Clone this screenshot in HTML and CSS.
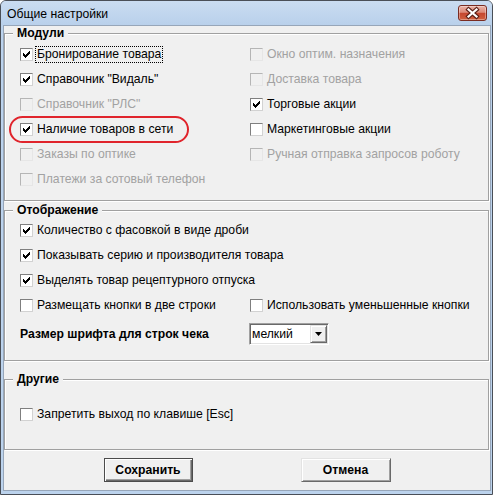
FILE: index.html
```html
<!DOCTYPE html>
<html lang="ru">
<head>
<meta charset="utf-8">
<title>Общие настройки</title>
<link rel="stylesheet" href="styles.css">
</head>
<body>
<div class="window">
  <div class="titlebar">
    <span class="title">Общие настройки</span>
    <div class="close">
      <svg width="27" height="14" viewBox="0 0 27 14">
        <path d="M9.5 3.5 L17.5 10.5 M17.5 3.5 L9.5 10.5" stroke="#5b2118" stroke-width="4.4" stroke-linecap="square" fill="none"/>
        <path d="M9.5 3.5 L17.5 10.5 M17.5 3.5 L9.5 10.5" stroke="#ffffff" stroke-width="2.2" stroke-linecap="square" fill="none"/>
      </svg>
    </div>
  </div>
  <div class="client">
    <fieldset class="group g1">
      <legend>Модули</legend>
      <div class="grid">
        <div class="cb"><span class="box"><svg class="chk" width="11" height="11" viewBox="-2 -2 11 11"><path d="M0 2H1V3H2V4H3V3H4V2H5V1H6V0H7V3H6V4H5V5H4V6H3V7H2V6H1V5H0Z"/></svg></span><span class="lbl focus">Бронирование товара</span></div>
        <div class="cb disabled"><span class="box"></span><span class="lbl">Окно оптим. назначения</span></div>
        <div class="cb"><span class="box"><svg class="chk" width="11" height="11" viewBox="-2 -2 11 11"><path d="M0 2H1V3H2V4H3V3H4V2H5V1H6V0H7V3H6V4H5V5H4V6H3V7H2V6H1V5H0Z"/></svg></span><span class="lbl">Справочник "Видаль"</span></div>
        <div class="cb disabled"><span class="box"></span><span class="lbl">Доставка товара</span></div>
        <div class="cb disabled"><span class="box"></span><span class="lbl">Справочник "РЛС"</span></div>
        <div class="cb"><span class="box"><svg class="chk" width="11" height="11" viewBox="-2 -2 11 11"><path d="M0 2H1V3H2V4H3V3H4V2H5V1H6V0H7V3H6V4H5V5H4V6H3V7H2V6H1V5H0Z"/></svg></span><span class="lbl">Торговые акции</span></div>
        <div class="cb"><span class="box"><svg class="chk" width="11" height="11" viewBox="-2 -2 11 11"><path d="M0 2H1V3H2V4H3V3H4V2H5V1H6V0H7V3H6V4H5V5H4V6H3V7H2V6H1V5H0Z"/></svg></span><span class="lbl">Наличие товаров в сети</span></div>
        <div class="cb"><span class="box"></span><span class="lbl">Маркетинговые акции</span></div>
        <div class="cb disabled"><span class="box"></span><span class="lbl">Заказы по оптике</span></div>
        <div class="cb disabled"><span class="box"></span><span class="lbl">Ручная отправка запросов роботу</span></div>
        <div class="cb disabled"><span class="box"></span><span class="lbl">Платежи за сотовый телефон</span></div>
      </div>
    </fieldset>

    <fieldset class="group g2">
      <legend>Отображение</legend>
      <div class="grid">
        <div class="cb wide"><span class="box"><svg class="chk" width="11" height="11" viewBox="-2 -2 11 11"><path d="M0 2H1V3H2V4H3V3H4V2H5V1H6V0H7V3H6V4H5V5H4V6H3V7H2V6H1V5H0Z"/></svg></span><span class="lbl">Количество с фасовкой в виде дроби</span></div>
        <div class="cb wide"><span class="box"><svg class="chk" width="11" height="11" viewBox="-2 -2 11 11"><path d="M0 2H1V3H2V4H3V3H4V2H5V1H6V0H7V3H6V4H5V5H4V6H3V7H2V6H1V5H0Z"/></svg></span><span class="lbl">Показывать серию и производителя товара</span></div>
        <div class="cb wide"><span class="box"><svg class="chk" width="11" height="11" viewBox="-2 -2 11 11"><path d="M0 2H1V3H2V4H3V3H4V2H5V1H6V0H7V3H6V4H5V5H4V6H3V7H2V6H1V5H0Z"/></svg></span><span class="lbl">Выделять товар рецептурного отпуска</span></div>
        <div class="cb"><span class="box"></span><span class="lbl">Размещать кнопки в две строки</span></div>
        <div class="cb"><span class="box"></span><span class="lbl">Использовать уменьшенные кнопки</span></div>
      </div>
      <div class="size-row">
        <span class="size-label">Размер шрифта для строк чека</span>
        <div class="select">
          <span class="value">мелкий</span>
          <span class="drop"><svg width="7" height="4" viewBox="0 0 7 4"><path d="M0 0 H7 L3.5 4 Z" fill="#000"/></svg></span>
        </div>
      </div>
    </fieldset>

    <fieldset class="group g3">
      <legend>Другие</legend>
      <div class="grid">
        <div class="cb wide"><span class="box"></span><span class="lbl">Запретить выход по клавише [Esc]</span></div>
      </div>
    </fieldset>

    <div class="buttons">
      <div class="btn default">Сохранить</div>
      <div class="btn cancel">Отмена</div>
    </div>
  </div>
  <div class="highlight"></div>
</div>
</body>
</html>
```
FILE: styles.css
```css
* { box-sizing: border-box; }
html, body { margin: 0; padding: 0; }
body {
  font-family: "Liberation Sans", Arial, sans-serif;
  font-size: 12.2px;
  color: #000;
  background: #ffffff;
}
.window {
  position: relative;
  width: 493px;
  height: 495px;
  border: 1px solid #4a4f57;
  border-radius: 6px 6px 0 0;
  background: #bcd3ed;
  display: flex;
  flex-direction: column;
  overflow: hidden;
}
.titlebar {
  height: 24px;
  flex: none;
  display: flex;
  align-items: flex-start;
  background: linear-gradient(#cadcf1, #b9d0eb);
}
.title {
  margin: 6px 0 0 6px;
  line-height: 14px;
  color: #000;
}
.close {
  margin: 4px 5px 0 auto;
  width: 29px;
  height: 16px;
  border: 1px solid #7a2c22;
  border-radius: 3px;
  background: linear-gradient(#eab3a7 0%, #dc8a78 45%, #c5472f 52%, #d0603f 100%);
  box-shadow: inset 0 0 0 1px rgba(255, 255, 255, 0.35);
  display: flex;
}
.client {
  flex: 1;
  margin: 0 1px 3px 2px;
  border: 1px solid #97a6b9;
  background: #f0f0f0;
  display: flex;
  flex-direction: column;
}
.group {
  margin: 0 1px 0 0;
  border: 1px solid #a0a0a0;
  box-shadow: inset 1px 1px 0 #ffffff, 1px 1px 0 #ffffff;
  min-width: 0;
}
.group legend {
  padding: 0 4px;
  margin: 0;
  font-weight: bold;
  line-height: 14px;
  background: #f0f0f0;
}
.g1 { padding: 2px 8px 8px; }
.g2 { margin-top: 2px; padding: 1px 8px 15px; }
.g3 { margin-top: 11px; padding: 16px 8px 22px; }
.grid {
  display: grid;
  grid-template-columns: 230px 1fr;
  margin-left: 7px;
}
.cb {
  display: flex;
  align-items: center;
  height: 25px;
  white-space: nowrap;
}
.cb.wide { grid-column: 1 / -1; }
.box {
  position: relative;
  flex: none;
  width: 13px;
  height: 13px;
  border: 1px solid;
  border-color: #7f7f7f #d2d2d2 #d2d2d2 #7f7f7f;
  background: #ffffff;
}
.chk {
  position: absolute;
  left: 0;
  top: 0;
  shape-rendering: crispEdges;
}
.chk path { fill: #000; }
.disabled .box {
  background: #f0f0f0;
  border-color: #b5b5b5 #e6e6e6 #e6e6e6 #b5b5b5;
}
.lbl {
  margin-left: 2px;
  padding: 1px;
  border: 1px dotted transparent;
  line-height: 13px;
}
.lbl.focus { border-color: #000; }
.disabled .lbl { color: #a2a2a2; }
.size-row {
  display: grid;
  grid-template-columns: 229px 80px;
  align-items: center;
  height: 22px;
  margin: 5px 0 0 7px;
}
.size-label { font-weight: bold; }
.select {
  width: 80px;
  height: 22px;
  display: flex;
  align-items: stretch;
  background: #ffffff;
  border: 1px solid;
  border-color: #a0a0a0 #ffffff #ffffff #a0a0a0;
  box-shadow: inset 1px 1px 0 #696969, inset -1px -1px 0 #e3e3e3;
  padding: 1px;
}
.value {
  flex: 1;
  padding-left: 1px;
  line-height: 18px;
}
.drop {
  width: 17px;
  flex: none;
  background: #f0f0f0;
  border: 1px solid;
  border-color: #e3e3e3 #696969 #696969 #e3e3e3;
  box-shadow: inset 1px 1px 0 #ffffff, inset -1px -1px 0 #a0a0a0;
  display: flex;
  align-items: center;
  justify-content: center;
}
.buttons {
  display: flex;
  justify-content: center;
  gap: 108px;
  margin-top: 8px;
}
.btn {
  height: 24px;
  display: flex;
  align-items: center;
  justify-content: center;
  font-weight: bold;
  background: #f0f0f0;
}
.btn.default {
  width: 89px;
  border: 1px solid #4c4c4c;
  box-shadow: inset 1px 1px 0 #ffffff, inset -1px -1px 0 #696969, inset -2px -2px 0 #a0a0a0;
}
.btn.cancel {
  width: 90px;
  border: 1px solid;
  border-color: #e3e3e3 #696969 #696969 #e3e3e3;
  box-shadow: inset 1px 1px 0 #ffffff, inset -1px -1px 0 #a0a0a0;
}
.highlight {
  position: absolute;
  left: 8px;
  top: 115px;
  width: 180px;
  height: 27px;
  border: 2px solid #e0242c;
  border-radius: 14px;
  pointer-events: none;
}
```
